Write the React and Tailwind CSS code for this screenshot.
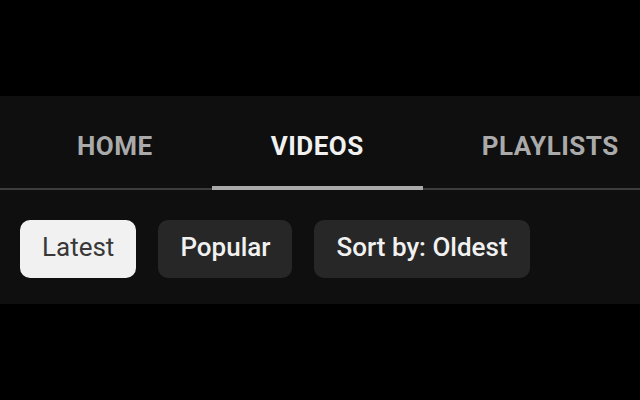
const tabs = ['HOME', 'VIDEOS', 'PLAYLISTS']
const chips = ['Latest', 'Popular', 'Sort by: Oldest']

export default function App() {
  const activeTab = 'VIDEOS'
  const activeChip = 'Latest'

  return (
    <div className="flex h-[400px] w-[640px] flex-col justify-center overflow-hidden bg-black font-['Roboto',sans-serif]">
      <div className="h-[208px] bg-[#0f0f0f]">
        <div className="flex h-[94px] border-b-2 border-[#3d3d3d] pl-[18px]">
          {tabs.map((tab) => (
            <div
              key={tab}
              className={
                'mb-[-2px] flex shrink-0 items-center border-b-4 px-[59px] pt-[10px] text-[26px] font-bold tracking-[0.5px] ' +
                (tab === activeTab
                  ? 'border-[#aaaaaa] text-[#f1f1f1]'
                  : 'border-transparent text-[#aaaaaa]')
              }
            >
              {tab}
            </div>
          ))}
        </div>
        <div className="flex gap-[22px] px-5 pt-[30px]">
          {chips.map((chip) => (
            <div
              key={chip}
              className={
                'flex h-[58px] items-center rounded-[10px] px-[22px] pb-[3px] text-[26px] font-medium ' +
                (chip === activeChip
                  ? 'bg-[#f1f1f1] font-normal text-[#383838]'
                  : 'bg-[#272727] text-[#f1f1f1]')
              }
            >
              {chip}
            </div>
          ))}
        </div>
      </div>
    </div>
  )
}
